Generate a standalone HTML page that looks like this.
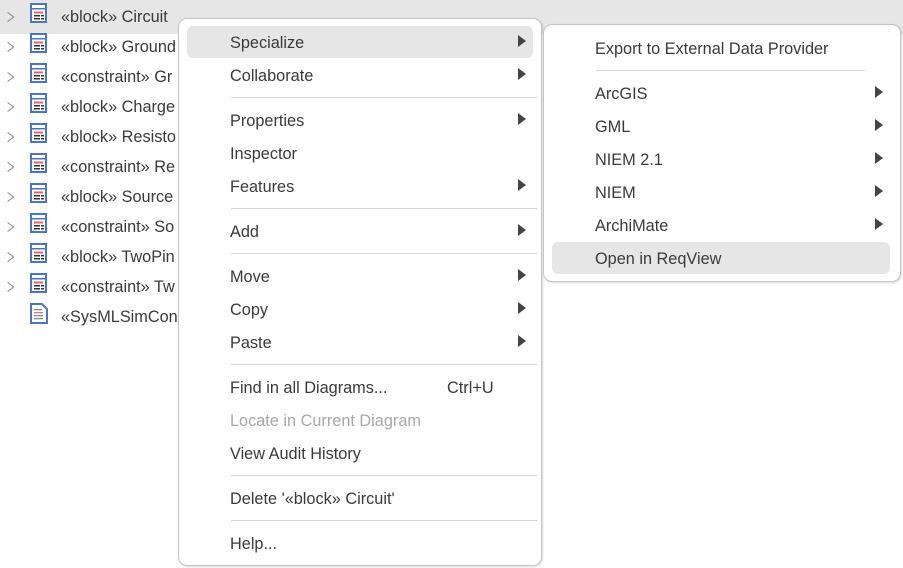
<!DOCTYPE html>
<html><head><meta charset="utf-8"><style>
*{margin:0;padding:0;box-sizing:border-box}
body{width:903px;height:568px;background:#fff;position:relative;overflow:hidden;font-family:"Liberation Sans",sans-serif;font-size:16.3px;color:#3a3a3a}
.row{position:absolute;left:0;width:903px;height:30px}
.row.sel{background:#e6e6e6;height:34px;top:0}
.chev{position:absolute;left:4px;width:8px;height:8px;border-right:1px solid #888;border-bottom:1px solid #888;transform:rotate(-45deg) skew(8deg,8deg)}
.ic{position:absolute;left:30px}
.t{position:absolute;left:61px;white-space:nowrap}
.menu{position:absolute;background:#fff;border:1.5px solid #c4c4c4;border-radius:9px;box-shadow:1px 1px 2px rgba(0,0,0,.15)}
.it{position:absolute;white-space:nowrap;line-height:20px}
.hl{position:absolute;background:#e6e6e6;border-radius:6px}
.sep{position:absolute;height:1px;background:#d6d6d6}
.ar{position:absolute;width:0;height:0;border-top:6px solid transparent;border-bottom:6px solid transparent;border-left:8px solid #444}
.dis{color:#a8a8a8}
</style></head><body>
<div class="row sel"></div>
<svg width="0" height="0" style="position:absolute"><defs>
<g id="blk"><rect x="1" y="1" width="15" height="18" fill="#fff" stroke="#4a76c1" stroke-width="2"/><rect x="2" y="5" width="13" height="1.5" fill="#4a76c1"/><rect x="4" y="8.5" width="9" height="2" fill="#e8636a"/><rect x="4" y="12" width="6" height="1.5" fill="#333"/><rect x="11" y="12" width="3" height="1.5" fill="#333"/><rect x="4" y="15" width="6" height="1.5" fill="#333"/><rect x="11" y="15" width="3" height="1.5" fill="#333"/></g>
</defs></svg>
<div id="tree"></div>
<script>
var names=["«block» Circuit","«block» Ground","«constraint» Gr","«block» Charge","«block» Resisto","«constraint» Re","«block» Source","«constraint» So","«block» TwoPin","«constraint» Tw"];
var h="";
for(var i=0;i<10;i++){var c=17+30*i;
h+='<div class="chev" style="top:'+(c-4)+'px"></div>';
h+='<svg class="ic" style="top:'+(c-14)+'px" width="18" height="21"><use href="#blk"/></svg>';
h+='<div class="t" style="top:'+(c-9)+'px">'+names[i]+'</div>';}
h+='<svg class="ic" style="top:303px" width="18" height="21"><path d="M1 1H12L17 6V20H1Z" fill="#fff" stroke="#4a76c1" stroke-width="2"/><rect x="4" y="6" width="8" height="1.3" fill="#888"/><rect x="4" y="9" width="9" height="1.3" fill="#d77"/><rect x="4" y="12" width="9" height="1.3" fill="#888"/><rect x="4" y="15" width="9" height="1.3" fill="#888"/></svg>';
h+='<div class="t" style="top:308px">«SysMLSimCon</div>';
document.getElementById("tree").innerHTML=h;
</script>
<div class="menu" style="left:178px;top:18px;width:364px;height:548px"></div>
<div class="menu" style="left:543px;top:24px;width:358px;height:258px"></div>
<div class="hl" style="left:187px;top:26px;width:346px;height:32px"></div>
<div class="hl" style="left:552px;top:242px;width:338px;height:32px"></div>
<div id="m"></div>
<script>
var L=[["Specialize",42,1],["Collaborate",75,1],["-",97],["Properties",120,1],["Inspector",153],["Features",186,1],["-",208],["Add",231,1],["-",253],["Move",276,1],["Copy",309,1],["Paste",342,1],["-",364],["Find in all Diagrams...",387],["Locate in Current Diagram",420,0,1],["View Audit History",453],["-",475],["Delete '«block» Circuit'",498],["-",520],["Help...",543]];
var s="";
L.forEach(function(a){if(a[0]=="-"){s+='<div class="sep" style="left:231px;width:306px;top:'+a[1]+'px"></div>';return;}
s+='<div class="it'+(a[3]?' dis':'')+'" style="left:230px;top:'+(a[1]-9)+'px">'+a[0]+'</div>';
if(a[2])s+='<div class="ar" style="left:518px;top:'+(a[1]-7)+'px"></div>';});
s+='<div class="it" style="left:447px;top:378px">Ctrl+U</div>';
var R=[["Export to External Data Provider",48],["-",70],["ArcGIS",93,1],["GML",126,1],["NIEM 2.1",159,1],["NIEM",192,1],["ArchiMate",225,1],["Open in ReqView",258]];
R.forEach(function(a){if(a[0]=="-"){s+='<div class="sep" style="left:596px;width:269px;top:'+a[1]+'px"></div>';return;}
s+='<div class="it" style="left:595px;top:'+(a[1]-9)+'px">'+a[0]+'</div>';
if(a[2])s+='<div class="ar" style="left:875px;top:'+(a[1]-7)+'px"></div>';});
document.getElementById("m").innerHTML=s;
</script>
</body></html>
